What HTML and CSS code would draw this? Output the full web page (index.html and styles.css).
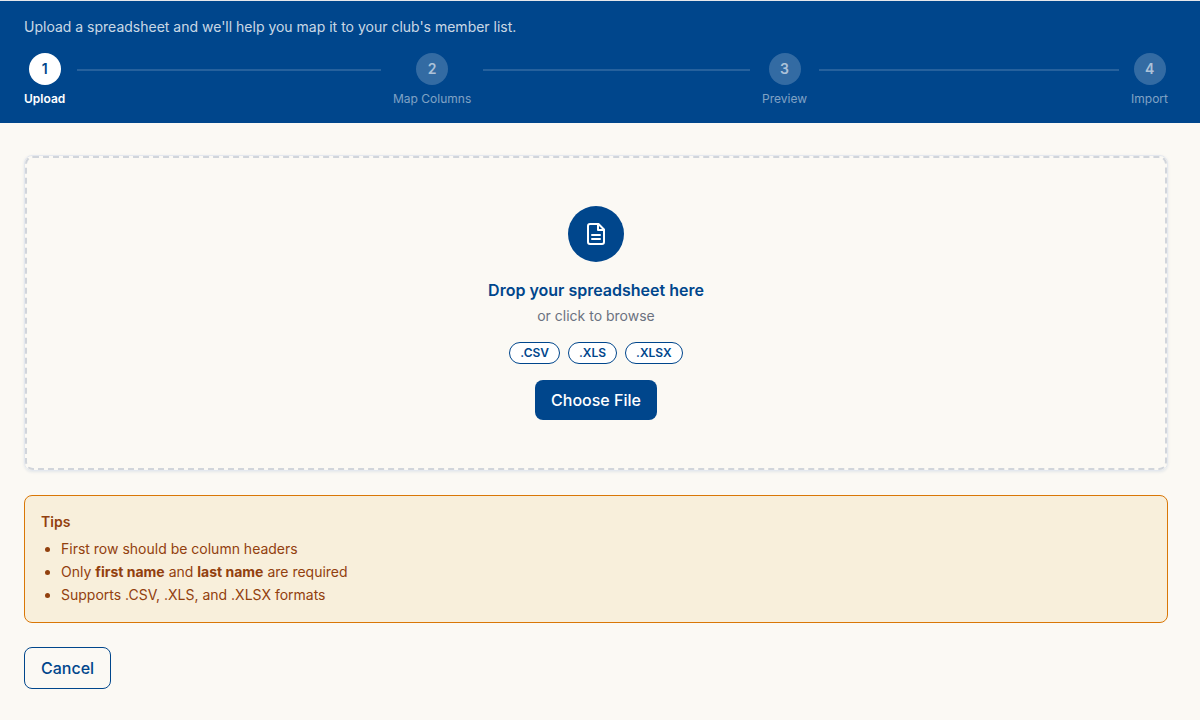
FILE: index.html
```html
<!DOCTYPE html>
<html lang="en">
<head>
<meta charset="utf-8">
<meta name="viewport" content="width=device-width, initial-scale=1">
<title>Import Members</title>
<link rel="stylesheet" href="styles.css">
</head>
<body>
<header class="banner">
  <p class="intro">Upload a spreadsheet and we'll help you map it to your club's member list.</p>
  <ol class="steps">
    <li class="step step-active"><div class="step-body"><span class="step-number">1</span><span class="step-label">Upload</span></div></li>
    <li class="step"><div class="step-body"><span class="step-number">2</span><span class="step-label">Map Columns</span></div></li>
    <li class="step"><div class="step-body"><span class="step-number">3</span><span class="step-label">Preview</span></div></li>
    <li class="step"><div class="step-body"><span class="step-number">4</span><span class="step-label">Import</span></div></li>
  </ol>
</header>
<main class="content">
  <section class="card">
    <div class="dropzone">
      <div class="file-icon">
        <svg width="24" height="24" viewBox="0 0 24 24" fill="none" stroke="currentColor" stroke-width="2" stroke-linecap="round" stroke-linejoin="round" aria-hidden="true">
          <path d="M14.5 2H6a2 2 0 0 0-2 2v16a2 2 0 0 0 2 2h12a2 2 0 0 0 2-2V7.5Z"/>
          <path d="M14 2v6h6"/>
          <path d="M16 13H8M16 17H8"/>
        </svg>
      </div>
      <h2 class="drop-title">Drop your spreadsheet here</h2>
      <p class="drop-hint">or click to browse</p>
      <ul class="formats">
        <li class="format">.CSV</li>
        <li class="format">.XLS</li>
        <li class="format">.XLSX</li>
      </ul>
      <button type="button" class="button button-primary">Choose File</button>
    </div>
  </section>
  <section class="tips">
    <h3 class="tips-title">Tips</h3>
    <ul class="tips-list">
      <li>First row should be column headers</li>
      <li>Only <strong>first name</strong> and <strong>last name</strong> are required</li>
      <li>Supports .CSV, .XLS, and .XLSX formats</li>
    </ul>
  </section>
  <button type="button" class="button button-outline">Cancel</button>
</main>
</body>
</html>
```
FILE: styles.css
```css
:root {
  --blue: #00468c;
  --page: #fbf9f4;
  --amber: #d97706;
  --brown: #92400e;
}

* { box-sizing: border-box; }

body {
  margin: 0;
  background: var(--page);
  font-family: Inter, "Liberation Sans", sans-serif;
  font-size: 14px;
  line-height: 20px;
}

h2, h3, p, ul, ol { margin: 0; padding: 0; }

.banner {
  border-top: 1px solid #e5e7eb;
  padding: 16px 32px 16px 24px;
  background: var(--blue);
  color: #fff;
}

.intro { color: rgba(255, 255, 255, 0.8); }

.steps {
  display: flex;
  margin-top: 16px;
  list-style: none;
}

.step {
  display: flex;
  flex: 1;
}

.step:last-child { flex: none; }

.step:not(:last-child)::after {
  content: "";
  flex: 1;
  height: 2px;
  margin: 16px 12px 0;
  background: rgba(255, 255, 255, 0.15);
}

.step-body {
  display: flex;
  flex-direction: column;
  align-items: center;
  gap: 6px;
}

.step-number {
  display: flex;
  align-items: center;
  justify-content: center;
  width: 32px;
  height: 32px;
  border-radius: 50%;
  background: rgba(255, 255, 255, 0.2);
  color: rgba(255, 255, 255, 0.6);
  font-weight: 600;
}

.step-label {
  color: rgba(255, 255, 255, 0.5);
  font-size: 12px;
  line-height: 16px;
}

.step-active .step-number {
  background: #fff;
  color: var(--blue);
}

.step-active .step-label {
  color: #fff;
  font-weight: 600;
}

.content {
  display: flex;
  flex-direction: column;
  gap: 24px;
  padding: 32px 32px 32px 24px;
}

.card {
  border: 1px solid #e4e8ee;
  border-radius: 8px;
  box-shadow: 0 1px 3px rgba(0, 70, 140, 0.1);
}

.dropzone {
  display: flex;
  flex-direction: column;
  align-items: center;
  padding: 48px 24px;
  border: 2px dashed #d1d5db;
  border-radius: 8px;
}

.file-icon {
  display: flex;
  align-items: center;
  justify-content: center;
  width: 56px;
  height: 56px;
  border-radius: 50%;
  background: var(--blue);
  color: #fff;
}

.drop-title {
  margin-top: 16px;
  color: var(--blue);
  font-size: 16px;
  font-weight: 600;
  line-height: 24px;
}

.drop-hint {
  margin-top: 4px;
  color: #6b7280;
}

.formats {
  display: flex;
  gap: 8px;
  margin: 16px 0;
  list-style: none;
}

.format {
  padding: 0 10px;
  border: 1px solid var(--blue);
  border-radius: 11px;
  background: #fff;
  color: var(--blue);
  font-size: 12px;
  font-weight: 600;
}

.button {
  border-radius: 8px;
  padding: 8px 16px;
  font: 500 16px/24px Inter, "Liberation Sans", sans-serif;
}

.button-primary {
  border: 0;
  background: var(--blue);
  color: #fff;
}

.button-outline {
  align-self: flex-start;
  border: 1px solid var(--blue);
  background: transparent;
  color: var(--blue);
}

.tips {
  padding: 16px;
  border: 1px solid var(--amber);
  border-radius: 8px;
  background: #f8efdb;
  color: var(--brown);
}

.tips-title {
  font-size: 14px;
  font-weight: 600;
}

.tips-list {
  display: flex;
  flex-direction: column;
  gap: 3px;
  margin-top: 7px;
  padding: 0 0 1px 20px;
}
```
